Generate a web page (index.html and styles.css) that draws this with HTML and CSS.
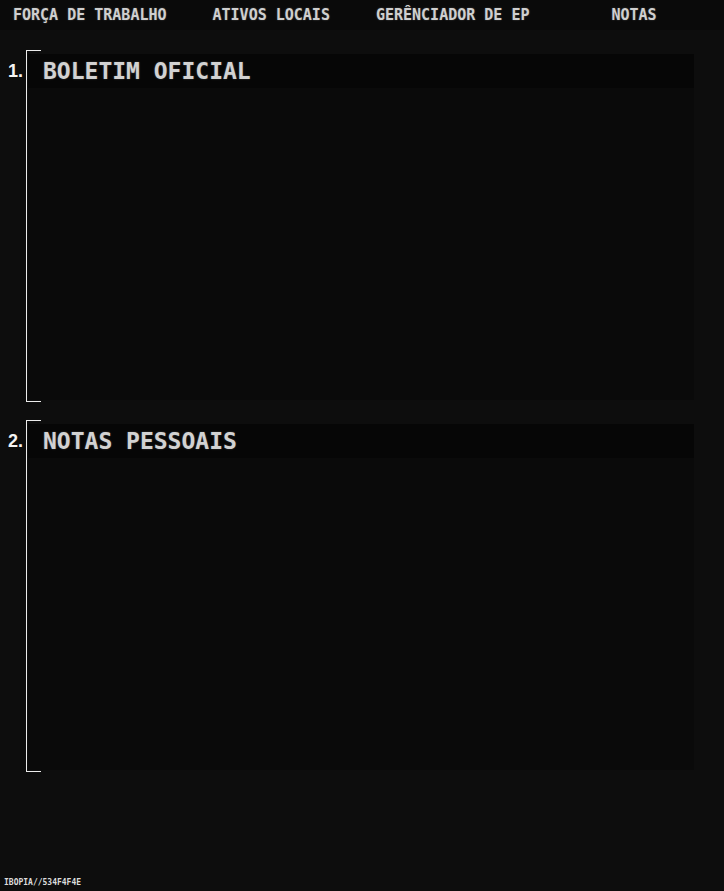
FILE: index.html
```html
<!DOCTYPE html>
<html lang="pt">
<head>
<meta charset="utf-8">
<title>Notas</title>
<link rel="stylesheet" href="styles.css">
</head>
<body>
<nav class="nav">
  <span class="nav-item">FORÇA DE TRABALHO</span>
  <span class="nav-item">ATIVOS LOCAIS</span>
  <span class="nav-item">GERÊNCIADOR DE EP</span>
  <span class="nav-item nav-item-last">NOTAS</span>
</nav>
<main class="main">
  <section class="section">
    <div class="num">1.</div>
    <div class="bracket">
      <div class="panel">
        <div class="panel-title">BOLETIM OFICIAL</div>
        <div class="panel-body"></div>
      </div>
    </div>
  </section>
  <section class="section">
    <div class="num">2.</div>
    <div class="bracket">
      <div class="panel">
        <div class="panel-title">NOTAS PESSOAIS</div>
        <div class="panel-body"></div>
      </div>
    </div>
  </section>
</main>
<footer class="footer">IBOPIA//534F4F4E</footer>
</body>
</html>
```

FILE: styles.css
```css
html, body {
  margin: 0;
  padding: 0;
}
body {
  width: 724px;
  height: 891px;
  background: #0d0d0d;
  display: flex;
  flex-direction: column;
  overflow: hidden;
  font-family: "DejaVu Sans Mono", "Liberation Mono", monospace;
}
.nav {
  height: 30px;
  display: flex;
  align-items: center;
  padding-left: 13px;
  background: #0a0a0a;
}
.nav-item {
  font-size: 15px;
  font-weight: bold;
  color: #cfcfcf;
  line-height: 18px;
  margin-right: 46px;
  text-shadow: 0 0 2px rgba(220, 220, 220, 0.3);
  white-space: nowrap;
}
.nav-item:nth-child(3) {
  margin-right: 82px;
}
.nav-item-last {
  margin-right: 0;
}
.main {
  display: flex;
  flex-direction: column;
  gap: 18px;
  padding-top: 20px;
  padding-left: 8px;
}
.section {
  display: flex;
}
.num {
  width: 18px;
  font-family: "Liberation Sans", Arial, sans-serif;
  font-weight: bold;
  font-size: 18px;
  line-height: 18px;
  color: #f4f4f4;
  margin-top: 12px;
}
.bracket {
  position: relative;
  flex: 1;
  border-left: 1px solid #ececec;
  padding: 4px 30px 2px 1px;
}
.bracket::before,
.bracket::after {
  content: "";
  position: absolute;
  left: 0;
  width: 14px;
  height: 1px;
  background: #ececec;
}
.bracket::before {
  top: 0;
}
.bracket::after {
  bottom: 0;
}
.panel {
  background: #0a0a0a;
  display: flex;
  flex-direction: column;
}
.panel-title {
  height: 34px;
  display: flex;
  align-items: center;
  padding-left: 15px;
  background: #060606;
  font-size: 23px;
  font-weight: bold;
  color: #d2d2d2;
  text-shadow: 0 0 2px rgba(220, 220, 220, 0.3);
}
.panel-body {
  height: 312px;
}
.footer {
  margin-top: auto;
  padding: 0 0 3px 4px;
  font-size: 8px;
  line-height: 10px;
  font-weight: bold;
  color: #dcdcdc;
}
```
